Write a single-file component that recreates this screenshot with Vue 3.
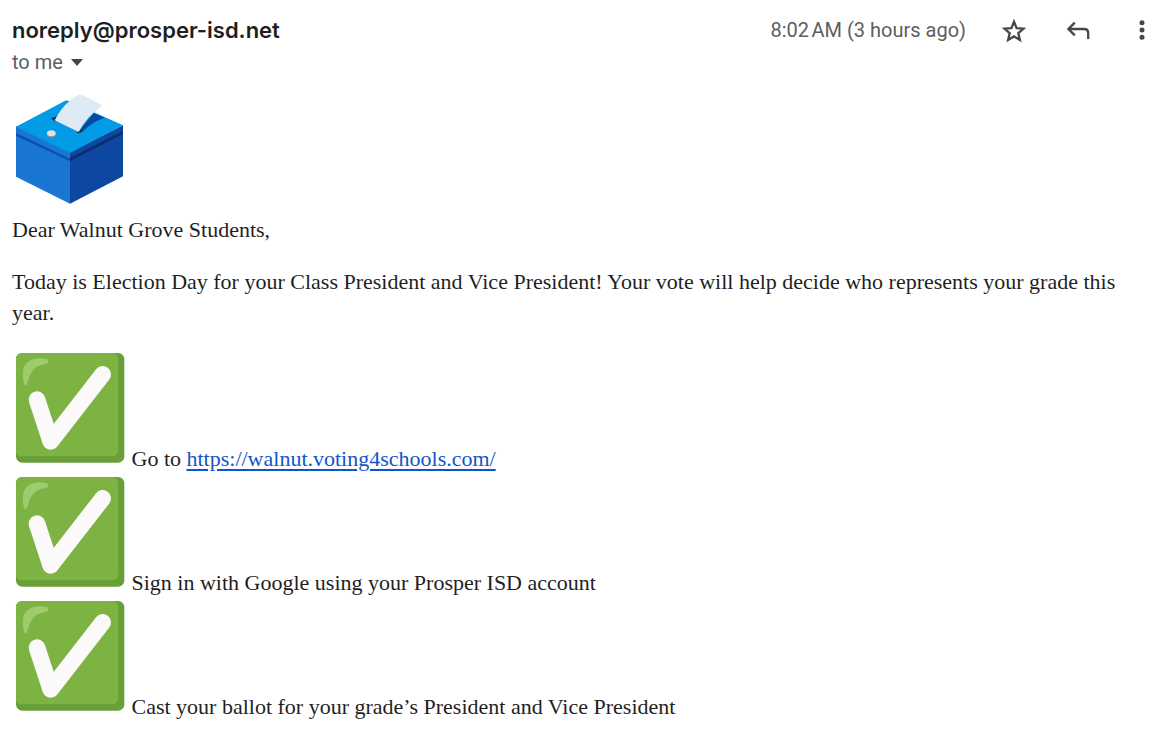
<script setup>
const steps = [
  { text: 'Go to ', link: 'https://walnut.voting4schools.com/' },
  { text: 'Sign in with Google using your Prosper ISD account' },
  { text: 'Cast your ballot for your grade’s President and Vice President' },
]
</script>

<template>
  <article class="message">
    <header class="head">
      <div class="from">
        <h1 class="sender">noreply@prosper-isd.net</h1>
        <button class="recipient" type="button">
          to me
          <svg class="caret" viewBox="0 0 12 7" aria-hidden="true"><path d="M0 0h12L6 7z" /></svg>
        </button>
      </div>
      <time class="time">8:02&#x202f;AM (3 hours ago)</time>
      <div class="actions">
        <button type="button" aria-label="Star">
          <svg viewBox="0 0 28 28"><path class="line" d="M14 4.8l2.6 6.3 6.9.6-5.2 4.5 1.6 6.7-5.9-3.5-5.9 3.5 1.6-6.7-5.2-4.5 6.9-.6z" /></svg>
        </button>
        <button type="button" aria-label="Reply">
          <svg viewBox="0 0 28 28"><path class="line" d="M10.8 5.6L4.4 12l6.4 6.4M4.8 12H20q4.2 0 4.2 4.2V22" /></svg>
        </button>
        <button type="button" aria-label="More">
          <svg viewBox="0 0 28 28"><circle cx="14" cy="5.8" r="2.5" /><circle cx="14" cy="13" r="2.5" /><circle cx="14" cy="20.2" r="2.5" /></svg>
        </button>
      </div>
    </header>

    <div class="body">
      <div>
        <svg class="emoji" viewBox="36 28 342 348" role="img" aria-label="Ballot box">
          <path fill="#1976d2" d="M48 136L210 213V369L48 288z" />
          <path fill="#0d47a1" d="M369 134L210 213V369L369 287z" />
          <path fill="#0d4fae" d="M48 157L210 234V242L48 165z" />
          <path fill="#0a2f6b" d="M369 151L210 232V241L369 160z" />
          <path fill="#039be5" d="M48 138L194 61Q200 58 206 61L369 134L210 217z" />
          <path fill="#0d47a1" d="M281 97L314 111Q276 123 248 153L235 153z" />
          <path fill="#082f63" d="M153 113L172 107L166 123z" />
          <path fill="#263238" d="M230 156L236 145L247 151Q242 158 236 158z" />
          <path fill="#deebf5" d="M164 119Q190 66 235 43Q241 40 248 43L302 71Q308 75 303 79Q260 108 236 154z" />
          <ellipse cx="154" cy="161" rx="14" ry="10" fill="#78909c" />
          <ellipse cx="154" cy="158" rx="13" ry="9" fill="#e0e0e0" />
        </svg>
      </div>
      <p>Dear Walnut Grove Students,</p>
      <p>Today is Election Day for your Class President and Vice President! Your vote will help decide who represents your grade this year.</p>
      <div class="steps">
        <div v-for="step in steps" :key="step.text">
          <svg class="emoji" viewBox="36 30 342 348" role="img" aria-label="Check mark">
            <rect x="48" y="39" width="325" height="329" rx="19" fill="#689f38" />
            <path fill="#7cb342" d="M67 39H338Q354 39 354 57V331Q354 349 336 349H66Q48 349 48 331V58Q48 39 67 39z" />
            <path fill="#aed581" fill-opacity=".7" d="M69 107Q65 57 119 55Q146 55 146 65Q145 71 122 75Q94 83 84 122Q80 137 75 136Q69 132 69 107z" />
            <path fill="none" stroke="#fcf9fb" stroke-width="50" stroke-linecap="round" stroke-linejoin="round" d="M111 179L152 304L308 103" />
          </svg>
          {{ step.text }}<a v-if="step.link" :href="step.link">{{ step.link }}</a>
        </div>
      </div>
    </div>
  </article>
</template>

<style>
body {
  margin: 0;
  background: #fff;
}
</style>

<style scoped>
.message {
  padding: 14px 0 0 12px;
  color: #1f1f1f;
}
.head {
  display: flex;
  align-items: flex-start;
  font-family: Roboto, "Liberation Sans", sans-serif;
}
.from {
  flex: 1;
}
.sender {
  margin: 0;
  font-family: Inter, Roboto, sans-serif;
  font-size: 22px;
  line-height: 32px;
  font-weight: 600;
}
button {
  border: 0;
  padding: 0;
  background: none;
  color: #444746;
  cursor: pointer;
}
.recipient {
  display: flex;
  align-items: center;
  gap: 8px;
  font: inherit;
  font-size: 20px;
  line-height: 32px;
  color: #5e5e5e;
}
.caret {
  width: 12px;
  height: 7px;
  fill: #444746;
}
.time {
  font-size: 20px;
  line-height: 32px;
  color: #5e5e5e;
}
.actions {
  display: flex;
  gap: 36px;
  padding: 3px 2px 0 34px;
}
.actions svg {
  display: block;
  width: 28px;
  height: 28px;
  fill: currentColor;
}
.actions .line {
  fill: none;
  stroke: currentColor;
  stroke-width: 2.3;
}
.body {
  padding: 12px 4px 0 0;
  font-family: Georgia, "Liberation Serif", serif;
  font-size: 22px;
  line-height: 31px;
}
.emoji {
  width: 114px;
  height: 116px;
  vertical-align: baseline;
}
p {
  margin: 0 0 21px;
}
.steps {
  margin-top: 22px;
}
a {
  color: #1155cc;
  text-underline-offset: 3px;
}
</style>
